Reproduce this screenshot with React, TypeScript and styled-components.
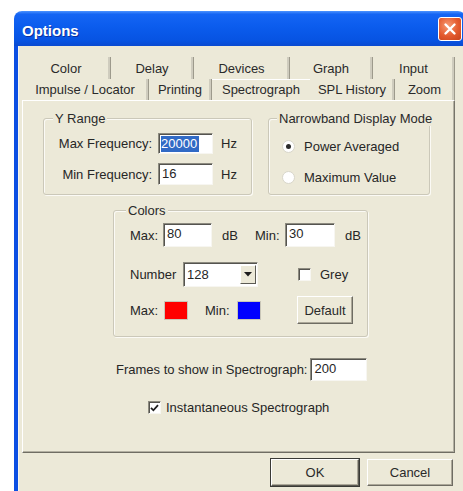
import React from "react";
import styled, { createGlobalStyle, css } from "styled-components";

const GlobalStyle = createGlobalStyle`
  html, body { margin: 0; padding: 0; background: #ffffff; overflow: hidden; }
  body {
    font-family: "Liberation Sans", Arial, sans-serif;
    font-size: 13px;
    color: #262626;
  }
  * { box-sizing: border-box; }
`;

const FACE = "#ece9d8";

const Page = styled.div`
  width: 463px;
  height: 491px;
  padding: 11px 0 0 14px;
  overflow: hidden;
`;

const Window = styled.div`
  width: 452px;
  height: 500px;
  display: flex;
  flex-direction: column;
  border-radius: 8px 8px 0 0;
  overflow: hidden;
`;

const TitleBar = styled.div`
  flex: none;
  height: 35px;
  display: flex;
  align-items: center;
  justify-content: space-between;
  padding: 0 4px 0 8px;
  background: linear-gradient(
    180deg,
    #4d93ff 0%,
    #1565f4 9%,
    #0b5ced 45%,
    #0753e2 85%,
    #0a4ad0 100%
  );
`;

const Title = styled.span`
  padding-top: 4px;
  font-family: "Liberation Sans", Arial, sans-serif;
  font-weight: bold;
  font-size: 15px;
  color: #ffffff;
  text-shadow: 1px 1px 0 #0b2f9c;
`;

const CloseButton = styled.div`
  width: 24px;
  height: 24px;
  display: flex;
  align-items: center;
  justify-content: center;
  border: 1px solid #ffffff;
  border-radius: 3px;
  background: radial-gradient(circle at 40% 35%, #f79a72 0%, #e3592d 55%, #c6421c 100%);
`;

const Body = styled.div`
  flex: 1;
  background: ${FACE};
  border-left: 4px solid #0b4fe3;
  box-shadow: inset 1px 0 0 #f6f5ee;
  padding: 11px 0 0 4px;
`;

const TabControl = styled.div`
  width: 433px;
  display: flex;
  flex-direction: column;
`;

const TabRow = styled.div<{ $h: number }>`
  display: flex;
  height: ${(p) => p.$h}px;
`;

const Tab = styled.div<{ $w: number; $active?: boolean }>`
  flex: none;
  width: ${(p) => p.$w}px;
  display: flex;
  align-items: center;
  justify-content: center;
  white-space: nowrap;
  color: #2a2a2a;
  border-right: ${(p) => (p.$active ? "none" : "1px solid #9d9a8c")};
  box-shadow: ${(p) => (p.$active ? "none" : "inset -2px 0 0 #cfccbe")};
  ${(p) =>
    p.$active &&
    css`
      padding-bottom: 2px;
      border-top: 1px solid #ffffff;
    `}
`;

const Pane = styled.div`
  height: 353px;
  border-top: 1px solid #ffffff;
  border-left: 1px solid #ffffff;
  border-right: 1px solid #76746a;
  border-bottom: 1px solid #6f6d63;
  box-shadow: inset -1px -1px 0 #b3b0a2;
  display: flex;
  flex-direction: column;
`;

const GroupRow = styled.div`
  display: flex;
  gap: 16px;
  padding: 17px 0 0 20px;
`;

const Group = styled.div<{ $w: number; $h: number }>`
  flex: none;
  width: ${(p) => p.$w}px;
  height: ${(p) => p.$h}px;
  border: 1px solid #cbc8b9;
  border-radius: 3px;
  box-shadow: inset 1px 1px 0 #fbfaf5, 1px 1px 0 #fbfaf5;
  display: flex;
  flex-direction: column;
`;

const Caption = styled.div<{ $x: number }>`
  width: max-content;
  margin: -8px 0 0 ${(p) => p.$x}px;
  padding: 0 2px;
  line-height: 15px;
  background: ${FACE};
  color: #2a2a2a;
`;

const FreqGrid = styled.div`
  display: grid;
  grid-template-columns: 108px 55px auto;
  grid-auto-rows: 22px;
  column-gap: 6px;
  row-gap: 9px;
  margin-top: 6px;
  align-items: center;
`;

const RightLabel = styled.span`
  justify-self: end;
  white-space: nowrap;
`;

const Unit = styled.span`
  padding-left: 2px;
`;

const Field = styled.div<{ $w: number; $h: number }>`
  width: ${(p) => p.$w}px;
  height: ${(p) => p.$h}px;
  flex: none;
  background: #ffffff;
  border-top: 1px solid #8d8b80;
  border-left: 1px solid #8d8b80;
  border-right: 1px solid #f7f6f1;
  border-bottom: 1px solid #f7f6f1;
  box-shadow: inset 1px 1px 0 #55544f;
  padding: 2px 0 0 3px;
  line-height: 16px;
  white-space: nowrap;
  overflow: hidden;
`;

const Selection = styled.span`
  display: inline-block;
  background: #316ac5;
  color: #ffffff;
  padding: 0 2px 0 0;
  margin-left: -1px;
`;

const RadioList = styled.div`
  display: flex;
  flex-direction: column;
  gap: 14px;
  margin-top: 12px;
  padding-left: 13px;
`;

const OptionRow = styled.div`
  display: flex;
  align-items: center;
  gap: 9px;
  height: 17px;
  white-space: nowrap;
`;

const Radio = styled.span`
  width: 13px;
  height: 13px;
  border-radius: 50%;
  flex: none;
  background: #ffffff;
  border: 1px solid #d8d6ca;
  display: flex;
  align-items: center;
  justify-content: center;
`;

const RadioDot = styled.span`
  width: 5px;
  height: 5px;
  border-radius: 50%;
  background: #2b2b2b;
`;

const Box = styled.span`
  width: 13px;
  height: 13px;
  flex: none;
  background: #ffffff;
  border-top: 1px solid #8d8b80;
  border-left: 1px solid #8d8b80;
  border-right: 1px solid #f7f6f1;
  border-bottom: 1px solid #f7f6f1;
  box-shadow: inset 1px 1px 0 #55544f;
  display: flex;
  align-items: center;
  justify-content: center;
`;

const ColorsGroup = styled(Group)`
  margin: 15px 0 0 90px;
`;

const ColorRows = styled.div`
  display: flex;
  flex-direction: column;
  padding: 5px 0 0 16px;
`;

const CRow = styled.div<{ $h: number; $mt?: number }>`
  display: flex;
  align-items: center;
  height: ${(p) => p.$h}px;
  margin-top: ${(p) => p.$mt ?? 0}px;
  white-space: nowrap;
`;

const Cell = styled.span<{ $w: number }>`
  flex: none;
  width: ${(p) => p.$w}px;
`;

const Spacer = styled.span<{ $w: number }>`
  flex: none;
  width: ${(p) => p.$w}px;
`;

const Combo = styled(Field)`
  display: flex;
  justify-content: space-between;
  padding: 0 1px 0 3px;
  align-items: center;
`;

const ComboArrow = styled.span`
  width: 16px;
  height: 19px;
  background: ${FACE};
  border-top: 1px solid #ffffff;
  border-left: 1px solid #ffffff;
  border-right: 1px solid #5b5a54;
  border-bottom: 1px solid #5b5a54;
  display: flex;
  align-items: center;
  justify-content: center;
`;

const Swatch = styled.span<{ $c: string }>`
  flex: none;
  width: 22px;
  height: 17px;
  background: ${(p) => p.$c};
  box-shadow: 0 0 0 1px #c9c6b8;
`;

const PushButton = styled.div<{ $w: number; $h: number; $default?: boolean }>`
  flex: none;
  width: ${(p) => p.$w}px;
  height: ${(p) => p.$h}px;
  display: flex;
  align-items: center;
  justify-content: center;
  background: ${FACE};
  border-top: 1px solid #ffffff;
  border-left: 1px solid #ffffff;
  border-right: 1px solid #6e6c63;
  border-bottom: 1px solid #6e6c63;
  box-shadow: inset -1px -1px 0 #aca899;
  color: #2a2a2a;
  ${(p) =>
    p.$default &&
    css`
      outline: 1px solid #3a3a36;
      outline-offset: 0;
      border-color: #ffffff #5b5a52 #5b5a52 #ffffff;
    `}
`;

const FramesRow = styled.div`
  display: flex;
  align-items: center;
  gap: 3px;
  margin-top: 21px;
  padding-left: 93px;
  white-space: nowrap;
`;

const CheckRow = styled.div`
  display: flex;
  align-items: center;
  gap: 5px;
  margin-top: 19px;
  padding-left: 125px;
  white-space: nowrap;
`;

const ButtonRow = styled.div`
  display: flex;
  justify-content: flex-end;
  gap: 8px;
  margin-top: 6px;
  padding-right: 2px;
`;

const CloseIcon = () => (
  <svg width="14" height="14" viewBox="0 0 14 14">
    <path d="M2.5 2.5 L11.5 11.5 M11.5 2.5 L2.5 11.5" stroke="#ffffff" strokeWidth="2.4" strokeLinecap="round" />
  </svg>
);

const ArrowIcon = () => (
  <svg width="8" height="5" viewBox="0 0 8 5">
    <path d="M0 0 H8 L4 4.5 Z" fill="#1c1c1c" />
  </svg>
);

const CheckIcon = () => (
  <svg width="9" height="8" viewBox="0 0 9 8">
    <path d="M1 3.8 L3.4 6.3 L8 1.2" stroke="#1f1f1f" strokeWidth="1.8" fill="none" />
  </svg>
);

const topTabs: [string, number][] = [
  ["Color", 89],
  ["Delay", 83],
  ["Devices", 96],
  ["Graph", 83],
  ["Input", 82],
];

const bottomTabs: [string, number][] = [
  ["Impulse / Locator", 127],
  ["Printing", 63],
  ["Spectrograph", 98],
  ["SPL History", 85],
  ["Zoom", 60],
];

export default function App() {
  return (
    <>
      <GlobalStyle />
      <Page>
        <Window>
          <TitleBar>
            <Title>Options</Title>
            <CloseButton>
              <CloseIcon />
            </CloseButton>
          </TitleBar>
          <Body>
            <TabControl>
              <TabRow $h={22}>
                {topTabs.map(([t, w]) => (
                  <Tab key={t} $w={w}>
                    {t}
                  </Tab>
                ))}
              </TabRow>
              <TabRow $h={21}>
                {bottomTabs.map(([t, w]) => (
                  <Tab key={t} $w={w} $active={t === "Spectrograph"}>
                    {t}
                  </Tab>
                ))}
              </TabRow>
              <Pane>
                <GroupRow>
                  <Group $w={209} $h={77}>
                    <Caption $x={9}>Y Range</Caption>
                    <FreqGrid>
                      <RightLabel>Max Frequency:</RightLabel>
                      <Field $w={55} $h={21}>
                        <Selection>20000</Selection>
                      </Field>
                      <Unit>Hz</Unit>
                      <RightLabel>Min Frequency:</RightLabel>
                      <Field $w={55} $h={22}>
                        16
                      </Field>
                      <Unit>Hz</Unit>
                    </FreqGrid>
                  </Group>
                  <Group $w={162} $h={77}>
                    <Caption $x={8}>Narrowband Display Mode</Caption>
                    <RadioList>
                      <OptionRow>
                        <Radio>
                          <RadioDot />
                        </Radio>
                        Power Averaged
                      </OptionRow>
                      <OptionRow>
                        <Radio />
                        Maximum Value
                      </OptionRow>
                    </RadioList>
                  </Group>
                </GroupRow>

                <ColorsGroup $w={255} $h={127}>
                  <Caption $x={12}>Colors</Caption>
                  <ColorRows>
                    <CRow $h={24}>
                      <Cell $w={33}>Max:</Cell>
                      <Field $w={49} $h={24}>
                        80
                      </Field>
                      <Spacer $w={10} />
                      <Cell $w={33}>dB</Cell>
                      <Cell $w={30}>Min:</Cell>
                      <Field $w={50} $h={24}>
                        30
                      </Field>
                      <Spacer $w={10} />
                      <Cell $w={20}>dB</Cell>
                    </CRow>
                    <CRow $h={25} $mt={15}>
                      <Cell $w={53}>Number</Cell>
                      <Combo $w={75} $h={25}>
                        128
                        <ComboArrow>
                          <ArrowIcon />
                        </ComboArrow>
                      </Combo>
                      <Spacer $w={40} />
                      <Box />
                      <Spacer $w={9} />
                      <Cell $w={30}>Grey</Cell>
                    </CRow>
                    <CRow $h={28} $mt={9}>
                      <Cell $w={35}>Max:</Cell>
                      <Swatch $c="#ff0000" />
                      <Spacer $w={18} />
                      <Cell $w={33}>Min:</Cell>
                      <Swatch $c="#0000ff" />
                      <Spacer $w={37} />
                      <PushButton $w={56} $h={28}>
                        Default
                      </PushButton>
                    </CRow>
                  </ColorRows>
                </ColorsGroup>

                <FramesRow>
                  Frames to show in Spectrograph:
                  <Field $w={57} $h={23}>
                    200
                  </Field>
                </FramesRow>

                <CheckRow>
                  <Box>
                    <CheckIcon />
                  </Box>
                  Instantaneous Spectrograph
                </CheckRow>
              </Pane>
              <ButtonRow>
                <PushButton $w={88} $h={27} $default>
                  OK
                </PushButton>
                <PushButton $w={86} $h={27}>
                  Cancel
                </PushButton>
              </ButtonRow>
            </TabControl>
          </Body>
        </Window>
      </Page>
    </>
  );
}
